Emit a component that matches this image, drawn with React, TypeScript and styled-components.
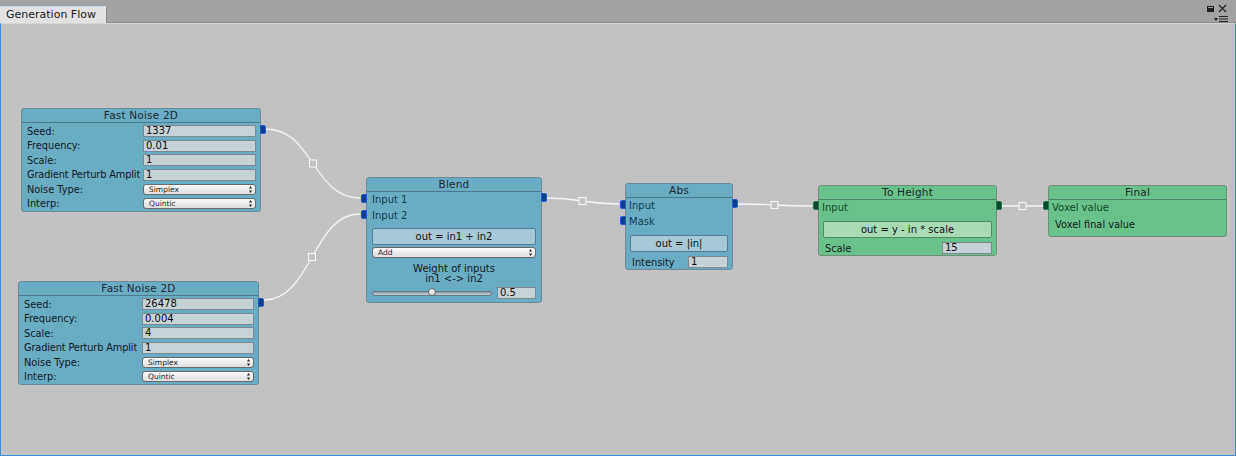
import React from "react";
import styled, { createGlobalStyle } from "styled-components";

const Global = createGlobalStyle`
  html, body { margin: 0; padding: 0; background: #c2c2c2; }
  body { font-family: "DejaVu Sans", Verdana, sans-serif; }
  #root { width: 1236px; height: 456px; }
`;

const Window = styled.div`
  width: 1236px;
  height: 456px;
  display: flex;
  flex-direction: column;
  background: #a2a2a2;
  overflow: hidden;
`;

const TabBar = styled.div`
  height: 23px;
  display: flex;
  align-items: flex-end;
  position: relative;
  box-sizing: border-box;
  border-bottom: 1px solid #8a8a8a;
`;

const Tab = styled.div`
  width: 107px;
  height: 17px;
  margin-bottom: -1px;
  background: #e2e2e2;
  border-top: 1px solid #c8d8ea;
  border-right: 1px solid #8a8a8a;
  box-sizing: border-box;
  font-size: 11px;
  color: #1a1a1a;
  padding-left: 6px;
  line-height: 15px;
`;

const WinIcons = styled.div`
  position: absolute;
  right: 8px;
  top: 4px;
  display: flex;
  flex-direction: column;
  align-items: flex-end;
  gap: 1px;
`;

const Canvas = styled.div`
  flex: 1;
  position: relative;
  background: #c2c2c2;
  border-left: 1px solid #3a8ed8;
  border-right: 1px solid #3a8ed8;
  border-bottom: 1px solid #3a8ed8;
  border-top: 1px solid #d4d4d4;
`;

const Edges = styled.svg`
  position: absolute;
  left: 0;
  top: 0;
  width: 1234px;
  height: 432px;
  pointer-events: none;
`;

const NodeBox = styled.div<{ $green?: boolean }>`
  position: absolute;
  box-sizing: border-box;
  background: ${(p) => (p.$green ? "#69c28b" : "#69adc5")};
  border: 1px solid ${(p) => (p.$green ? "#6f8f7c" : "#6e8a95")};
  border-radius: 3px;
  display: flex;
  flex-direction: column;
  font-size: 10px;
  color: #101a1e;
`;

const Header = styled.div`
  height: 13px;
  line-height: 13px;
  text-align: center;
  font-size: 10.5px;
  color: #1e282c;
  border-bottom: 1px solid rgba(40, 60, 70, 0.45);
  letter-spacing: 0.2px;
`;

const Body = styled.div`
  display: flex;
  flex-direction: column;
  padding: 1px 4px 0 5px;
`;

const Row = styled.div`
  height: 14.5px;
  display: flex;
  align-items: center;
  justify-content: space-between;
`;

const Label = styled.span`
  font-size: 9.8px;
  white-space: nowrap;
  overflow: hidden;
  letter-spacing: 0;
`;

const Field = styled.div<{ $w: number }>`
  width: ${(p) => p.$w}px;
  height: 12px;
  box-sizing: border-box;
  background: #c6d2d6;
  border: 1px solid #7c8a8f;
  font-size: 10px;
  line-height: 10px;
  padding-left: 2px;
  color: #0c0c0c;
  flex-shrink: 0;
`;

const Dropdown = styled.div<{ $w?: number }>`
  width: ${(p) => (p.$w ? `${p.$w}px` : "auto")};
  flex: ${(p) => (p.$w ? "0 0 auto" : "1")};
  height: 11px;
  box-sizing: border-box;
  border: 1px solid #6a6a6a;
  border-radius: 3px;
  background: linear-gradient(#fafafa, #dedede);
  font-size: 7.5px;
  line-height: 9px;
  padding: 0 3px 0 5px;
  display: flex;
  align-items: center;
  justify-content: space-between;
  color: #222;
`;

const UpDown = () => (
  <svg width="3" height="7" viewBox="0 0 3 7">
    <path d="M1.5 0 L3 2.5 L0 2.5 Z M1.5 7 L3 4.5 L0 4.5 Z" fill="#222" />
  </svg>
);

const PortLabel = styled.div<{ $green?: boolean }>`
  height: 16px;
  line-height: 16px;
  font-size: 10px;
  color: ${(p) => (p.$green ? "#0f4a28" : "#0d3d50")};
`;

const Formula = styled.div<{ $green?: boolean }>`
  height: 17px;
  box-sizing: border-box;
  margin: 4px 0 3px;
  border: 1px solid ${(p) => (p.$green ? "#4f8a62" : "#4f7f90")};
  border-radius: 2px;
  background: ${(p) => (p.$green ? "#a7dbb6" : "#a6c9d6")};
  text-align: center;
  font-size: 10px;
  line-height: 15px;
  color: #101010;
`;

const Caption = styled.div`
  text-align: center;
  font-size: 10px;
  line-height: 10px;
  color: #101a1e;
`;

const SliderRow = styled.div`
  display: flex;
  align-items: center;
  gap: 5px;
  height: 14px;
  margin-top: 2px;
`;

const Track = styled.div`
  flex: 1;
  height: 3px;
  position: relative;
  background: linear-gradient(#8a9aa0, #c8d2d6);
  border-radius: 2px;
  border: 1px solid #6a7a80;
`;

const Thumb = styled.div`
  position: absolute;
  top: -4px;
  width: 8px;
  height: 8px;
  border-radius: 50%;
  background: radial-gradient(circle at 40% 35%, #ffffff, #cfcfcf);
  border: 1px solid #6a6a6a;
  box-sizing: border-box;
`;

const Port = styled.div<{ $side: "l" | "r"; $y: number; $green?: boolean }>`
  position: absolute;
  ${(p) => (p.$side === "l" ? "left: -6px;" : "right: -6px;")}
  top: ${(p) => p.$y}px;
  width: 6px;
  height: 9px;
  box-sizing: border-box;
  background: ${(p) => (p.$green ? "#0c4a2e" : "#123c8a")};
  border: 1px solid ${(p) => (p.$green ? "#1f7a4d" : "#1e5ed6")};
  border-radius: ${(p) => (p.$side === "l" ? "2px 0 0 2px" : "0 2px 2px 0")};
`;

type NodeProps = {
  x: number;
  y: number;
  w: number;
  h: number;
  title: string;
  green?: boolean;
  children?: React.ReactNode;
};

const Node = ({ x, y, w, h, title, green, children }: NodeProps) => (
  <NodeBox $green={green} style={{ left: x, top: y, width: w, height: h }}>
    <Header>{title}</Header>
    {children}
  </NodeBox>
);

const NoiseNode = ({
  x,
  y,
  w,
  fieldW,
  values,
}: {
  x: number;
  y: number;
  w: number;
  fieldW: number;
  values: string[];
}) => (
  <Node x={x} y={y} w={w} h={104} title="Fast Noise 2D">
    <Body>
      <Row>
        <Label>Seed:</Label>
        <Field $w={fieldW}>{values[0]}</Field>
      </Row>
      <Row>
        <Label>Frequency:</Label>
        <Field $w={fieldW}>{values[1]}</Field>
      </Row>
      <Row>
        <Label>Scale:</Label>
        <Field $w={fieldW}>{values[2]}</Field>
      </Row>
      <Row>
        <Label style={{ letterSpacing: "-0.15px" }}>Gradient Perturb Amplit</Label>
        <Field $w={fieldW}>{values[3]}</Field>
      </Row>
      <Row>
        <Label>Noise Type:</Label>
        <Dropdown $w={fieldW}>
          Simplex<UpDown />
        </Dropdown>
      </Row>
      <Row>
        <Label>Interp:</Label>
        <Dropdown $w={fieldW}>
          Quintic<UpDown />
        </Dropdown>
      </Row>
    </Body>
    <Port $side="r" $y={16} />
  </Node>
);

const Edge = ({ x1, y1, x2, y2 }: { x1: number; y1: number; x2: number; y2: number }) => {
  const dx = Math.max(Math.abs(x2 - x1) * 0.5, 10);
  const mx = (x1 + x2) / 2;
  const my = (y1 + y2) / 2;
  return (
    <g>
      <path
        d={`M${x1},${y1} C${x1 + dx},${y1} ${x2 - dx},${y2} ${x2},${y2}`}
        fill="none"
        stroke="#f4f4f4"
        strokeWidth={1.3}
      />
      <rect x={mx - 3.5} y={my - 3.5} width={7} height={7} fill="#c2c2c2" stroke="#f8f8f8" strokeWidth={1} />
    </g>
  );
};

const RowPad = styled.div`
  padding: 0 5px 0 5px;
  display: flex;
  flex-direction: column;
`;

const InlineRow = styled.div`
  display: flex;
  align-items: center;
  justify-content: space-between;
  height: 14px;
  padding: 0 0 0 1px;
`;

export default function App() {
  return (
    <>
      <Global />
      <Window>
        <TabBar>
          <Tab>Generation Flow</Tab>
          <WinIcons>
            <svg width="22" height="10" viewBox="0 0 22 10">
              <rect x="1.5" y="2.5" width="6" height="5" fill="none" stroke="#222" />
              <rect x="2" y="4" width="5" height="3" fill="#222" />
              <path d="M13 1 L20 8 M20 1 L13 8" stroke="#222" strokeWidth="1.2" />
            </svg>
            <svg width="14" height="8" viewBox="0 0 14 8">
              <path d="M0 3 L4 3 L2 6 Z" fill="#222" />
              <path d="M5 1.5 H14 M5 4 H14 M5 6.5 H14" stroke="#222" strokeWidth="1" />
            </svg>
          </WinIcons>
        </TabBar>
        <Canvas>
          <Edges viewBox="0 0 1234 432">
            <Edge x1={265} y1={105} x2={359} y2={174} />
            <Edge x1={263} y1={276} x2={359} y2={190} />
            <Edge x1={545} y1={174} x2={618} y2={180} />
            <Edge x1={736} y1={180} x2={811} y2={182} />
            <Edge x1={1001} y1={182} x2={1042} y2={182} />
          </Edges>

          <NoiseNode x={20} y={84} w={240} fieldW={113} values={["1337", "0.01", "1", "1"]} />
          <NoiseNode x={17} y={257} w={241} fieldW={112} values={["26478", "0.004", "4", "1"]} />

          <Node x={365} y={153} w={176} h={126} title="Blend">
            <RowPad>
              <PortLabel>Input 1</PortLabel>
              <PortLabel>Input 2</PortLabel>
              <Formula>out = in1 + in2</Formula>
              <Dropdown style={{ marginTop: -1 }}>
                Add<UpDown />
              </Dropdown>
              <Caption style={{ marginTop: 6 }}>Weight of inputs</Caption>
              <Caption>in1 &lt;-&gt; in2</Caption>
              <SliderRow>
                <Track>
                  <Thumb style={{ left: 55 }} />
                </Track>
                <Field $w={39}>0.5</Field>
              </SliderRow>
            </RowPad>
            <Port $side="l" $y={16} />
            <Port $side="l" $y={32} />
            <Port $side="r" $y={15} />
          </Node>

          <Node x={624} y={159} w={108} h={87} title="Abs">
            <RowPad style={{ paddingLeft: 3, paddingRight: 4 }}>
              <PortLabel>Input</PortLabel>
              <PortLabel>Mask</PortLabel>
              <Formula style={{ marginTop: 5, marginLeft: 1 }}>out = |in|</Formula>
              <InlineRow style={{ paddingLeft: 3 }}>
                <Label>Intensity</Label>
                <Field $w={40}>1</Field>
              </InlineRow>
            </RowPad>
            <Port $side="l" $y={16} />
            <Port $side="l" $y={32} />
            <Port $side="r" $y={15} />
          </Node>

          <Node x={817} y={161} w={179} h={71} title="To Height" green>
            <RowPad style={{ paddingLeft: 3, paddingRight: 4 }}>
              <PortLabel $green>Input</PortLabel>
              <Formula $green style={{ marginTop: 5, marginLeft: 1 }}>
                out = y - in * scale
              </Formula>
              <InlineRow style={{ paddingLeft: 3 }}>
                <Label>Scale</Label>
                <Field $w={50}>15</Field>
              </InlineRow>
            </RowPad>
            <Port $side="l" $y={15} $green />
            <Port $side="r" $y={15} $green />
          </Node>

          <Node x={1047} y={161} w={179} h={52} title="Final" green>
            <RowPad style={{ paddingLeft: 3 }}>
              <PortLabel $green>Voxel value</PortLabel>
              <Label style={{ marginTop: 2, paddingLeft: 3, lineHeight: "14px" }}>Voxel final value</Label>
            </RowPad>
            <Port $side="l" $y={15} $green />
          </Node>
        </Canvas>
      </Window>
    </>
  );
}
